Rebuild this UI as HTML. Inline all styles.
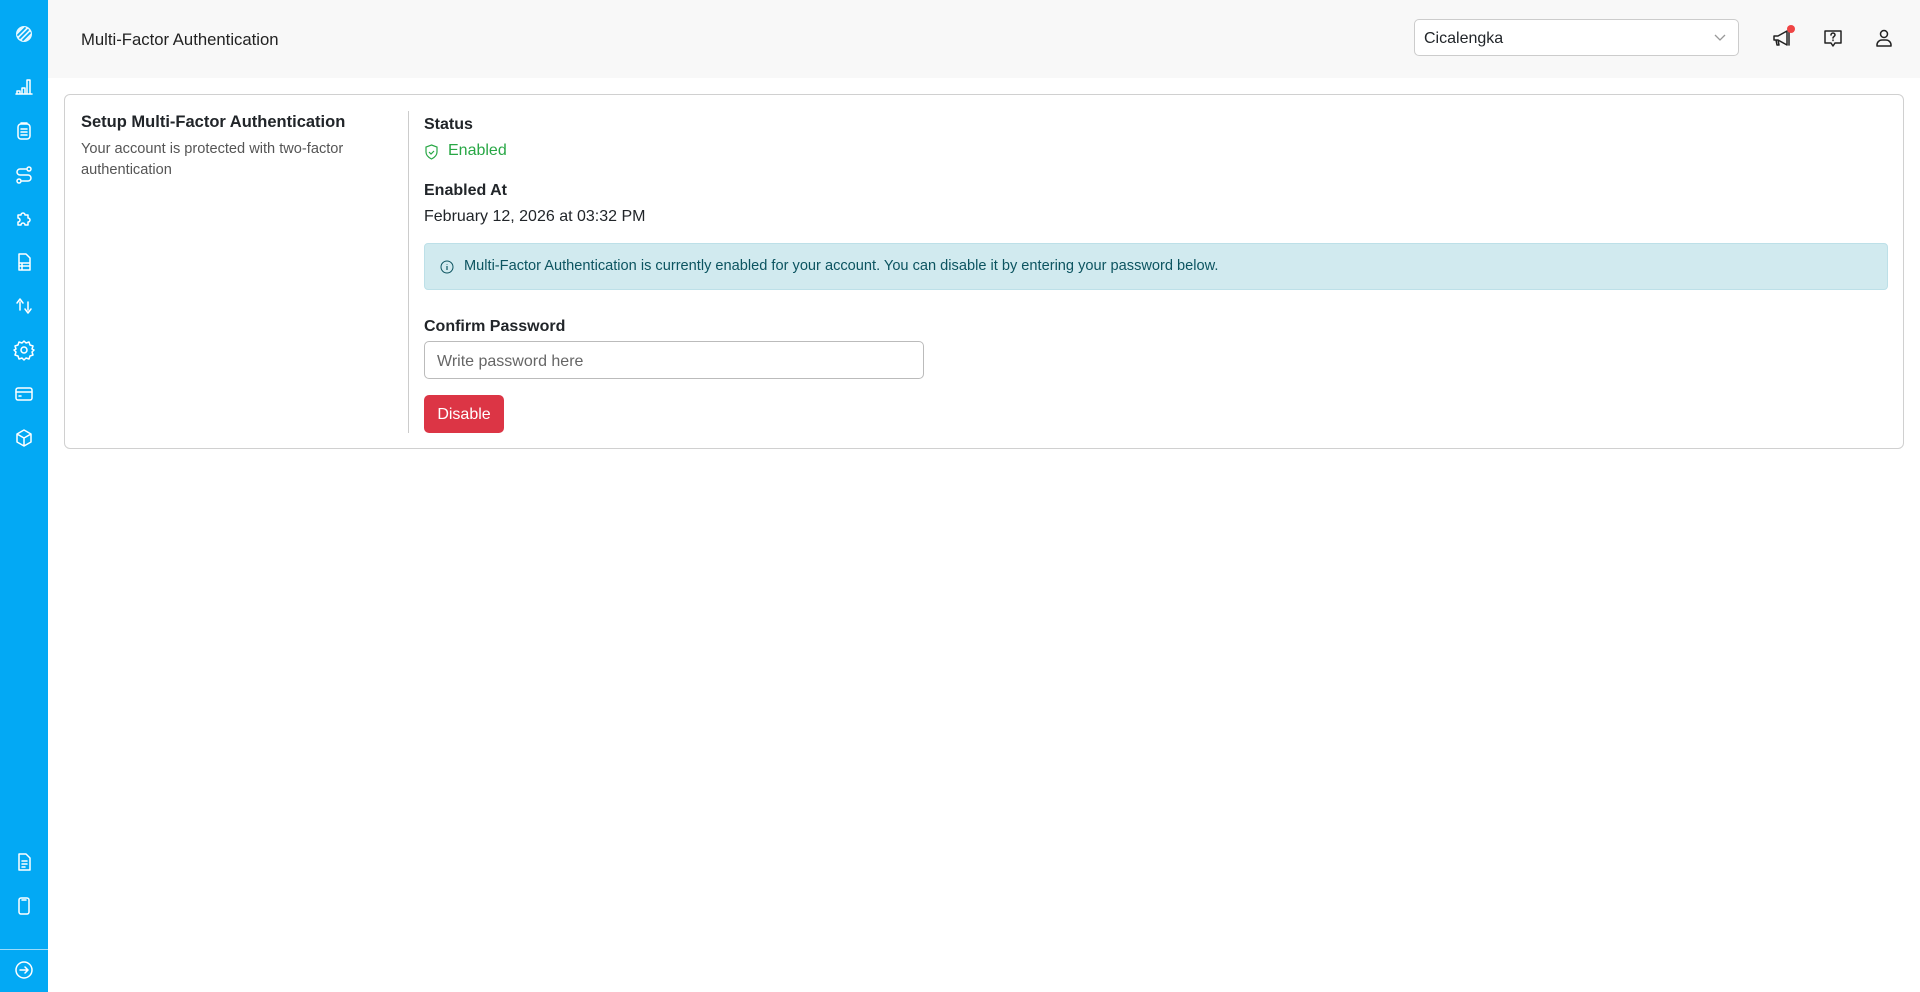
<!DOCTYPE html>
<html><head><meta charset="utf-8"><style>
*{box-sizing:border-box;margin:0;padding:0}
body{width:1920px;height:992px;font-family:"Liberation Sans",sans-serif;background:#fff;color:#212529;position:relative;overflow:hidden}
.sb{position:absolute;left:0;top:0;width:48px;height:992px;background:#03a9f4}
.sb svg{position:absolute;left:13px;width:22px;height:22px;fill:none;stroke:#fff;stroke-width:1.5;stroke-linecap:round;stroke-linejoin:round}
.hdr{position:absolute;left:48px;top:0;right:0;height:78px;background:#f8f8f8}
.t{position:absolute;left:81px;top:30px;font-size:16.7px;color:#222}
.sel{position:absolute;left:1414px;top:19px;width:325px;height:37px;border:1px solid #ccc;border-radius:5px;background:#fff;font-size:16px;padding:10px 9px}
.ic{position:absolute;top:27px;width:22px;height:22px;fill:none;stroke:#222;stroke-width:1.5;stroke-linecap:round;stroke-linejoin:round}
.card{position:absolute;left:64px;top:94px;width:1840px;height:355px;border:1px solid #d0d0d0;border-radius:6px}
.div{position:absolute;left:343px;top:16px;height:322px;border-left:1px solid #ccc}
.a{position:absolute;left:359px}
</style></head><body>
<div class="sb">
<svg style="top:23px" viewBox="0 0 22 22"><circle cx="11" cy="11" r="8" fill="#fff" stroke="none" opacity=".9"/><path d="M5 12l7-7M7 15l8-8M10 17l7-7" stroke="#03a9f4" stroke-width="1.8"/></svg>
<svg style="top:76px" viewBox="0 0 22 22"><path d="M3 18h16M4 18v-3h3v3M9 18v-6h3v6M14 18V4h3v14"/></svg>
<svg style="top:120px" viewBox="0 0 22 22"><rect x="5" y="4" width="12" height="15" rx="3"/><path d="M8 3h6M8 9h6M8 12h6M8 15h6"/></svg>
<svg style="top:164px" viewBox="0 0 22 22"><circle cx="6" cy="17" r="2"/><circle cx="16" cy="5" r="2"/><path d="M13 5H7a3 3 0 000 6h8a3 3 0 010 6h-6"/></svg>
<svg style="top:208px" viewBox="0 0 22 22"><path d="M5 7h3a2 2 0 014 0h3v3a2 2 0 010 4v3h-3a2 2 0 00-4 0H5v-3a2 2 0 000-4z"/></svg>
<svg style="top:251px" viewBox="0 0 22 22"><path d="M6 3h7l4 4v12H6zM6 12h11M6 15h11M9 12v7"/></svg>
<svg style="top:295px" viewBox="0 0 22 22"><path d="M7 15V7M4 8l3-4 3 4M15 7v8M12 14l3 4 3-4"/></svg>
<svg style="top:339px" viewBox="0 0 22 22"><circle cx="11" cy="11" r="3"/><path d="M11 2l2 2 3-1 1 3 3 1-1 3 2 1-2 2 1 3-3 1-1 3-3-1-2 2-2-2-3 1-1-3-3-1 1-3-2-2 2-1-1-3 3-1 1-3 3 1z"/></svg>
<svg style="top:383px" viewBox="0 0 22 22"><rect x="3" y="5" width="16" height="12" rx="2"/><path d="M3 9h16M6 13h2"/></svg>
<svg style="top:427px" viewBox="0 0 22 22"><path d="M11 3l7 4v8l-7 4-7-4V7zM4 7l7 4 7-4M11 11v8"/></svg>
<svg style="top:851px" viewBox="0 0 22 22"><path d="M6 3h7l4 4v12H6zM9 10h5M9 13h5M9 16h3"/></svg>
<svg style="top:895px" viewBox="0 0 22 22"><rect x="6" y="3" width="10" height="16" rx="2"/><path d="M9 5h4"/></svg>
<div style="position:absolute;left:0;top:949px;width:48px;border-top:1px solid rgba(255,255,255,.6)"></div>
<svg style="top:959px" viewBox="0 0 22 22"><circle cx="11" cy="11" r="8"/><path d="M7 11h8M12 8l3 3-3 3"/></svg>
</div>
<div class="hdr"></div>
<div class="t">Multi-Factor Authentication</div>
<div class="sel">Cicalengka<svg style="position:absolute;right:12px;top:14px;width:12px;height:8px" viewBox="0 0 12 8"><path d="M1 1l5 5 5-5" fill="none" stroke="#999" stroke-width="1.3"/></svg></div>
<svg class="ic" style="left:1771px" viewBox="0 0 22 22"><path d="M3 9h4l9-5v14l-9-5H3zM5 13l1 5h2l-1-5M18 4v14"/></svg>
<div style="position:absolute;left:1787px;top:25px;width:8px;height:8px;border-radius:50%;background:#ef4444"></div>
<svg class="ic" style="left:1822px" viewBox="0 0 22 22"><path d="M3 4h16v12h-6l-2 3-2-3H3z"/><path d="M9 8a2 2 0 114 0c0 1.5-2 1.5-2 3M11 13v.5"/></svg>
<svg class="ic" style="left:1873px" viewBox="0 0 22 22"><circle cx="11" cy="7" r="3.5"/><path d="M4 19v-1a5 5 0 015-5h4a5 5 0 015 5v1z"/></svg>
<div class="card">
<div style="position:absolute;left:16px;top:18px;font-size:16.5px;font-weight:bold">Setup Multi-Factor Authentication</div>
<div style="position:absolute;left:16px;top:44px;font-size:14.6px;color:#555;line-height:21px;width:300px">Your account is protected with two-factor authentication</div>
<div class="div"></div>
<div class="a" style="top:21px;font-size:16px;font-weight:bold">Status</div>
<div class="a" style="top:47px;font-size:16px;color:#28a745"><svg style="position:absolute;left:0;top:2px;width:15px;height:16px" viewBox="0 0 15 16"><path d="M7.5 1L13 3v5c0 3-2.5 5.5-5.5 7C4.5 13.5 2 11 2 8V3z M5 8l2 2 3-3" fill="none" stroke="#28a745" stroke-width="1.2"/></svg><span style="margin-left:24px">Enabled</span></div>
<div class="a" style="top:87px;font-size:16px;font-weight:bold">Enabled At</div>
<div class="a" style="top:113px;font-size:16px">February 12, 2026 at 03:32 PM</div>
<div class="a" style="top:148px;width:1464px;height:47px;background:#d1eaef;border:1px solid #bde0e8;border-radius:4px;font-size:14.6px;color:#0c5460;padding:14px 0 0 39px"><svg style="position:absolute;left:15px;top:16px;width:14px;height:14px" viewBox="0 0 14 14"><circle cx="7" cy="7" r="6" fill="none" stroke="#0c5460"/><path d="M7 6v4M7 4v.5" stroke="#0c5460" stroke-width="1.2"/></svg>Multi-Factor Authentication is currently enabled for your account. You can disable it by entering your password below.</div>
<div class="a" style="top:223px;font-size:16px;font-weight:bold">Confirm Password</div>
<div class="a" style="top:246px;width:500px;height:38px;border:1px solid #bbb;border-radius:5px;font-size:16px;color:#666;padding:11px 12px">Write password here</div>
<div class="a" style="top:300px;width:80px;height:38px;background:#dc3545;border-radius:5px;color:#fff;font-size:16px;text-align:center;line-height:40px">Disable</div>
</div>
</body></html>
